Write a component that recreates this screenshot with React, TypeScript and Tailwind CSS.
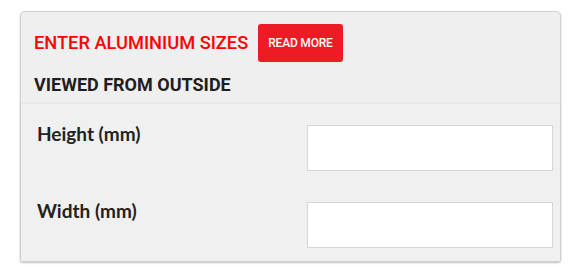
import React from 'react';

function SizeRow({ label, className = '' }: { label: string; className?: string }) {
  return (
    <div className={`flex items-start justify-between ${className}`}>
      <label className="-mt-[2px] font-['Lato',sans-serif] font-bold text-[19px] leading-[22px] text-[#222]">
        {label}
      </label>
      <input
        type="text"
        className="w-[246px] h-[46px] bg-white border border-[#d6d6d6] outline-none"
      />
    </div>
  );
}

export default function App() {
  return (
    <div className="w-full h-[274px] bg-white pt-[11px] pl-[20px]">
      <div className="w-[541px] h-[251px] bg-[#efefef] border border-[#d2d2d2] rounded-t-[5px] rounded-b-[3px] shadow-[0_1px_2px_rgba(0,0,0,0.25)] flex flex-col">
        {/* Header */}
        <div className="px-[13px] pt-[12px]">
          <div className="flex items-center gap-[10px]">
            <h2 className="font-['Roboto',sans-serif] font-medium text-[18.25px] text-[#ff0000]">
              ENTER ALUMINIUM SIZES
            </h2>
            <button className="h-[38px] px-[10px] rounded-[3px] bg-[#ed1c24] text-white font-['Roboto',sans-serif] font-medium text-[12px] tracking-[-0.2px]">
              READ MORE
            </button>
          </div>
          <h3 className="mt-[12px] font-['Roboto',sans-serif] font-bold text-[18px] leading-[22px] text-[#1e1e1e]">
            VIEWED FROM OUTSIDE
          </h3>
        </div>

        {/* Fields */}
        <div className="mt-[8px] flex-1 bg-[#f0f0f0] shadow-[0_-1px_3px_rgba(0,0,0,0.05)] pl-[16px] pr-[7px] pt-[21px]">
          <SizeRow label="Height (mm)" />
          <SizeRow label="Width (mm)" className="mt-[31px]" />
        </div>
      </div>
    </div>
  );
}
